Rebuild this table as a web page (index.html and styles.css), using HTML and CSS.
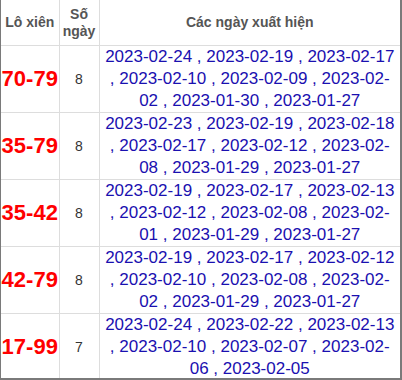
FILE: index.html
```html
<!DOCTYPE html>
<html lang="vi">
<head>
<meta charset="utf-8">
<title>Lô xiên</title>
<link rel="stylesheet" href="styles.css">
</head>
<body>
<div class="frame">
<table class="tbl">
<colgroup><col class="c1"><col class="c2"><col class="c3"></colgroup>
<thead>
<tr><th>Lô xiên</th><th>Số<br>ngày</th><th>Các ngày xuất hiện</th></tr>
</thead>
<tbody>
<tr><td class="pair">70-79</td><td class="cnt">8</td><td class="dates">2023-02-24 , 2023-02-19 , 2023-02-17 , 2023-02-10 , 2023-02-09 , 2023-02-02 , 2023-01-30 , 2023-01-27</td></tr>
<tr><td class="pair">35-79</td><td class="cnt">8</td><td class="dates">2023-02-23 , 2023-02-19 , 2023-02-18 , 2023-02-17 , 2023-02-12 , 2023-02-08 , 2023-01-29 , 2023-01-27</td></tr>
<tr><td class="pair">35-42</td><td class="cnt">8</td><td class="dates">2023-02-19 , 2023-02-17 , 2023-02-13 , 2023-02-12 , 2023-02-08 , 2023-02-01 , 2023-01-29 , 2023-01-27</td></tr>
<tr><td class="pair">42-79</td><td class="cnt">8</td><td class="dates">2023-02-19 , 2023-02-17 , 2023-02-12 , 2023-02-10 , 2023-02-08 , 2023-02-02 , 2023-01-29 , 2023-01-27</td></tr>
<tr><td class="pair">17-99</td><td class="cnt">7</td><td class="dates">2023-02-24 , 2023-02-22 , 2023-02-13 , 2023-02-10 , 2023-02-07 , 2023-02-06 , 2023-02-05</td></tr>
</tbody>
</table>
</div>
</body>
</html>
```
FILE: styles.css
```css
html, body {
  margin: 0;
  padding: 0;
  background: #fff;
}
.frame {
  width: 402px;
  height: 380px;
  box-sizing: border-box;
  border-left: 1px solid #7a7a7a;
  border-right: 2px solid #7a7a7a;
  border-bottom: 2px solid #7a7a7a;
  overflow: hidden;
  font-family: "Liberation Sans", Arial, sans-serif;
}
.tbl {
  width: 399px;
  border-collapse: collapse;
  table-layout: fixed;
}
.c1 { width: 58px; }
.c2 { width: 40px; }
.c3 { width: 301px; }
.tbl th {
  height: 45px;
  padding: 0;
  font-size: 14px;
  line-height: 17px;
  font-weight: bold;
  color: #555;
  text-align: center;
  vertical-align: middle;
  border-right: 1px solid #ddd;
  border-bottom: 1px solid #ddd;
}
.tbl td {
  padding: 0;
  height: 66px;
  text-align: center;
  vertical-align: middle;
  border-right: 1px solid #ddd;
  border-bottom: 1px solid #ddd;
}
.tbl th:last-child, .tbl td:last-child {
  border-right: none;
}
.pair {
  color: #f00;
  font-weight: bold;
  font-size: 22px;
  white-space: nowrap;
}
.cnt {
  color: #333;
  font-size: 14px;
}
.tbl td.dates {
  color: #1a10b0;
  font-size: 17px;
  line-height: 22px;
  padding: 0 5px;
}
```
